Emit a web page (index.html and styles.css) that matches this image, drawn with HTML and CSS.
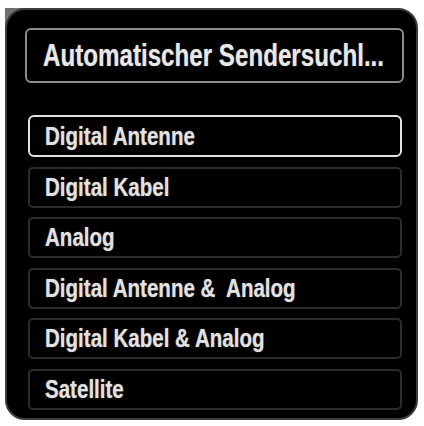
FILE: index.html
```html
<!DOCTYPE html>
<html lang="de">
<head>
<meta charset="utf-8">
<title>Automatischer Sendersuchlauf</title>
<link rel="stylesheet" href="styles.css">
</head>
<body>
<div class="frame">
  <div class="panel">
    <div class="title"><span class="txt">Automatischer Sendersuchl...</span></div>
    <ul class="list">
      <li class="item selected"><span class="txt">Digital Antenne</span></li>
      <li class="item"><span class="txt">Digital Kabel</span></li>
      <li class="item"><span class="txt">Analog</span></li>
      <li class="item"><span class="txt">Digital Antenne &amp;&nbsp; Analog</span></li>
      <li class="item"><span class="txt">Digital Kabel &amp; Analog</span></li>
      <li class="item"><span class="txt">Satellite</span></li>
    </ul>
  </div>
</div>
</body>
</html>
```
FILE: styles.css
```css
html, body {
  margin: 0;
  padding: 0;
  background: #ffffff;
}

body {
  width: 424px;
  height: 426px;
  overflow: hidden;
  font-family: "Liberation Sans", Arial, sans-serif;
}

.frame {
  margin: 8px 0 0 5px;
  width: 413px;
  height: 412px;
  background: linear-gradient(135deg, #6a6a6a 0%, #9a9a9a 6%, #ffffff 14%, #ffffff 100%);
}

.panel {
  box-sizing: border-box;
  width: 413px;
  height: 412px;
  padding: 18px 12px 0 18px;
  background: #000;
  border: 2px solid #3c3c3c;
  border-radius: 20px;
  display: flex;
  flex-direction: column;
}

.txt {
  display: inline-block;
  white-space: nowrap;
  transform-origin: 0 50%;
  font-weight: bold;
  text-shadow: 0 0 1.5px rgba(255, 255, 255, 0.45);
}

.title {
  box-sizing: border-box;
  height: 55px;
  padding-left: 16px;
  border: 2px solid #8c8c8c;
  border-radius: 6px;
  color: #e8e8e8;
  font-size: 32px;
  line-height: 51px;
  white-space: nowrap;
  overflow: hidden;
}

.title .txt {
  transform: scaleX(0.755);
}

.list {
  list-style: none;
  margin: 32px 2px 0 3px;
  padding: 0;
  display: flex;
  flex-direction: column;
  gap: 9.6px;
}

.item {
  box-sizing: border-box;
  height: 41px;
  padding-left: 15px;
  border: 2px solid #2c2c2c;
  border-radius: 5px;
  color: #e2e2e2;
  font-size: 26px;
  line-height: 37px;
  white-space: nowrap;
  overflow: hidden;
}

.item .txt {
  transform: scaleX(0.79);
}

.item.selected {
  height: 42px;
  border-color: #e2e2e2;
  border-radius: 6px;
  line-height: 38px;
}
```
